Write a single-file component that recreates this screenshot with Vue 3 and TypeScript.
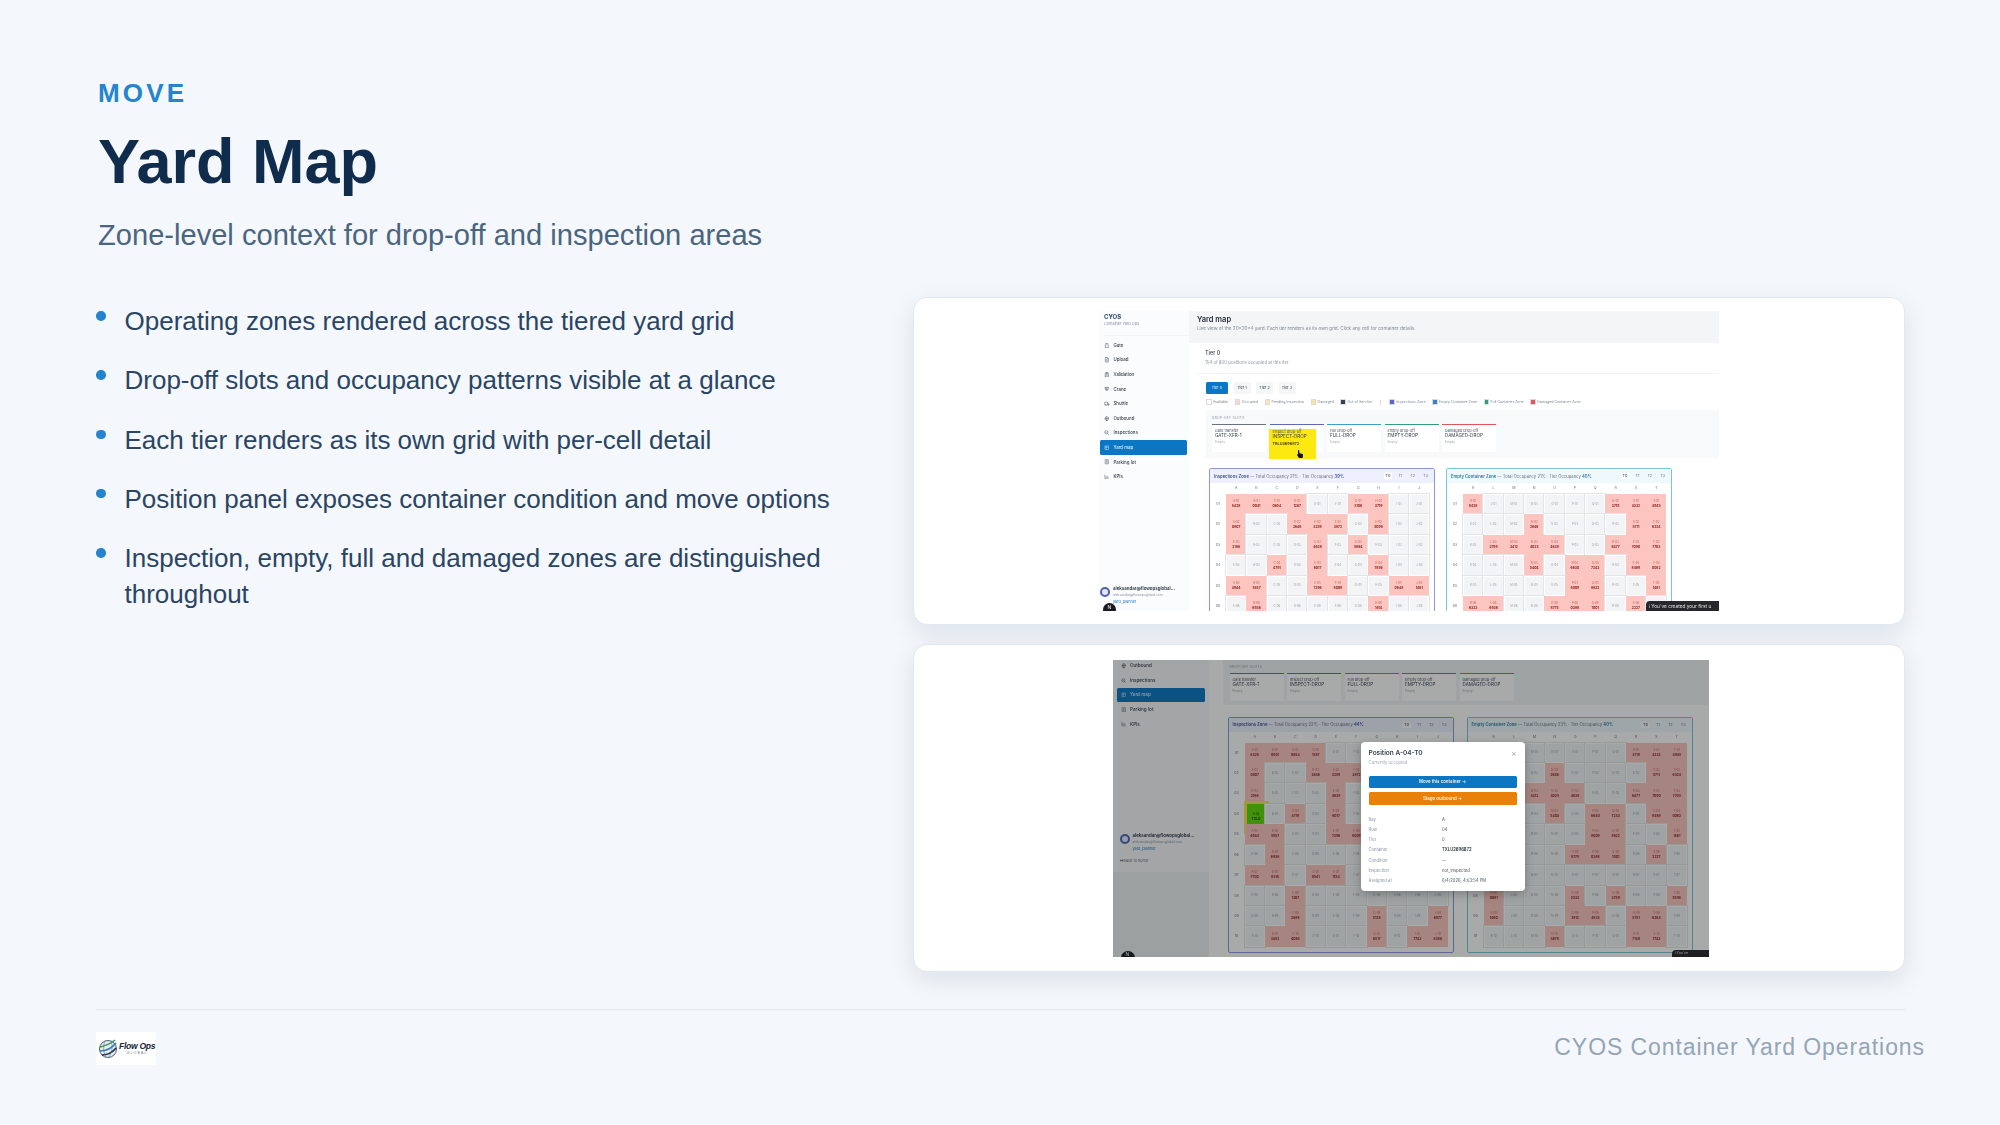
<script setup lang="ts">
interface Zone {
  name: string
  stats: string
  tier: string
  kind: string
  cols: string[]
  rows: string[]
}

const bullets = [
  'Operating zones rendered across the tiered yard grid',
  'Drop-off slots and occupancy patterns visible at a glance',
  'Each tier renders as its own grid with per-cell detail',
  'Position panel exposes container condition and move options',
  'Inspection, empty, full and damaged zones are distinguished throughout',
]

const leftCols = 'ABCDEFGHIJ'.split('')
const rightCols = 'KLMNOPQRST'.split('')
const leftRows = [
  '1111001100',
  '1001110100',
  '1000101000',
  '0010100100',
  '1100110011',
  '0100000100',
  '1101100000',
  '0010000000',
  '0010001001',
  '0110001011',
]
const rightRows = [
  '1000000111',
  '0001000011',
  '0111100111',
  '0001011011',
  '0000011001',
  '1100111010',
  '0000000000',
  '1000101001',
  '1000110110',
  '0001000110',
]

const makeZones = (a: string, b: string, c: string, d: string, count: number): Zone[] => [
  { name: 'Inspections Zone', stats: `— Total Occupancy ${a}% · Tier Occupancy`, tier: `${b}%`, kind: 'insp', cols: leftCols, rows: leftRows.slice(0, count) },
  { name: 'Empty Container Zone', stats: `— Total Occupancy ${c}% · Tier Occupancy`, tier: `${d}%`, kind: 'empty', cols: rightCols, rows: rightRows.slice(0, count) },
]
const zonesA = makeZones('21', '39', '21', '40', 6)
const zonesB = makeZones('22', '44', '23', '40', 10)

const slots = [
  { label: 'Gate transfer', code: 'GATE-XFR-1', color: '#6b7280' },
  { label: 'Inspect drop-off', code: 'INSPECT-DROP', color: '#6366c1' },
  { label: 'Full drop-off', code: 'FULL-DROP', color: '#3b9fc9' },
  { label: 'Empty drop-off', code: 'EMPTY-DROP', color: '#2f9e7e' },
  { label: 'Damaged drop-off', code: 'DAMAGED-DROP', color: '#e0565b' },
]

const icons: Record<string, string> = {
  Gate: 'M6 21V5a3 3 0 0 1 3-3h6a3 3 0 0 1 3 3v16M3 21h18M10 8h4',
  Upload: 'M6 2h8l5 5v15H6zM14 2v5h5M12 18v-6M9 14l3-3 3 3',
  Validation: 'M7 4h10a2 2 0 0 1 2 2v16H5V6a2 2 0 0 1 2-2zM9 2h6v4H9zM8 12h8M8 17h8',
  Crane: 'M2 6h20M12 6v8M6 6v12M18 6v12M9 14h6v5H9z',
  Shuttle: 'M3 5h12v12H3zM15 9h4l3 4v4h-7M7 20a2 2 0 1 0 0-4M18 20a2 2 0 1 0 0-4',
  Outbound: 'M12 3a8 8 0 1 1 0 16 8 8 0 0 1 0-16zM4 11h16M12 3v18M8 21h8',
  Inspections: 'M10 3a7 7 0 1 1 0 14 7 7 0 0 1 0-14zM15 15l6 6M7 10l2 2 4-4',
  'Yard map': 'M4 4h16v16H4zM4 10h16M10 4v16',
  'Parking lot': 'M5 3h14v18H5zM9 8h6M9 12h6M9 16h6',
  KPIs: 'M4 3v18h17M9 17v-6M14 17V8M19 17v-3',
}

const navA = ['Gate', 'Upload', 'Validation', 'Crane', 'Shuttle', 'Outbound', 'Inspections', 'Yard map', 'Parking lot', 'KPIs']
const navB = ['Outbound', 'Inspections', 'Yard map', 'Parking lot', 'KPIs']

const legendA = [
  { t: 'Available', c: '#ffffff' },
  { t: 'Occupied', c: '#fbd5d0' },
  { t: 'Pending Inspection', c: '#fde7b8' },
  { t: 'Damaged', c: '#fbe6a0' },
  { t: 'Out of Service', c: '#374151' },
]
const legendB = [
  { t: 'Inspections Zone', c: '#6366c1' },
  { t: 'Empty Container Zone', c: '#3b82c9' },
  { t: 'Full Container Zone', c: '#2f9e7e' },
  { t: 'Damaged Container Zone', c: '#e0565b' },
]

const details = [
  ['Bay', 'A'],
  ['Row', '04'],
  ['Tier', '0'],
  ['Container', 'TXLU2696872'],
  ['Condition', '—'],
  ['Inspection', 'not_inspected'],
  ['Assigned at', '6/4/2026, 4:03:54 PM'],
]

const rowLabel = (r: number) => String(r + 1).padStart(2, '0')
const boxNo = (r: number, c: number) => String(((r + 3) * 1379 + (c + 7) * 613) % 9000).padStart(4, '0')
</script>

<template>
  <div class="page">
    <header class="head">
      <div class="eyebrow">MOVE</div>
      <h1>Yard Map</h1>
      <p class="sub">Zone-level context for drop-off and inspection areas</p>
    </header>

    <main class="body">
      <ul class="points">
        <li v-for="b in bullets" :key="b">{{ b }}</li>
      </ul>

      <div class="cards">
        <section class="card">
          <div class="shot shot-a">
            <aside class="side">
              <div class="brand">CYOS</div>
              <div class="brand-sub">Container Yard Ops</div>
              <div class="nav">
                <div v-for="n in navA" :key="n" class="nav-item" :class="{ active: n === 'Yard map' }">
                  <svg class="nav-ic" viewBox="0 0 24 24"><path :d="icons[n]" /></svg>{{ n }}
                </div>
              </div>
              <div class="user">
                <span class="avatar"></span>
                <div>
                  <div class="u-name">aleksandar@flowopsglobal...</div>
                  <div class="u-mail">aleksandar@flowopsglobal.com</div>
                  <div class="u-role">yard_planner</div>
                </div>
              </div>
              <span class="help">N</span>
            </aside>
            <div class="main">
              <div class="top">
                <div class="top-title">Yard map</div>
                <div class="top-sub">Live view of the 20×20×4 yard. Each tier renders as its own grid. Click any cell for container details.</div>
              </div>
              <div class="tier-head">
                <div class="tier-title">Tier 0</div>
                <div class="tier-sub">154 of 800 positions occupied at this tier</div>
              </div>
              <div class="tabs">
                <span class="tab on">Tier 0</span>
                <span class="tab">Tier 1</span>
                <span class="tab">Tier 2</span>
                <span class="tab">Tier 3</span>
              </div>
              <div class="legend">
                <span v-for="l in legendA" :key="l.t" class="lg"><i :style="{ background: l.c }"></i>{{ l.t }}</span>
                <span class="lg-sep"></span>
                <span v-for="l in legendB" :key="l.t" class="lg"><i :style="{ background: l.c }"></i>{{ l.t }}</span>
              </div>
              <div class="drop">
                <div class="drop-title">DROP-OFF SLOTS</div>
                <div class="slots">
                  <div v-for="(s, i) in slots" :key="s.code" class="slot" :style="{ borderTopColor: s.color }">
                    <div class="s-label">{{ s.label }}</div>
                    <div class="s-code">{{ s.code }}</div>
                    <div class="s-state">Empty</div>
                    <div v-if="i === 1" class="mark">
                      <div class="s-label">Inspect drop-off</div>
                      <div class="s-code">INSPECT-DROP</div>
                      <div class="s-box">TRLU3696872</div>
                      <svg class="hand" viewBox="0 0 12 14"><path d="M4 1c.6 0 1 .4 1 1v4l4 .8c1 .2 1.6 1 1.5 2L10 13H4.500L1.500 8.500c-.4-.6.400-1.400 1-.9L3 8V2c0-.6.400-1 1-1z" fill="#111" /></svg>
                    </div>
                  </div>
                </div>
              </div>
              <div class="zones">
                <div v-for="z in zonesA" :key="z.name" class="zone" :class="z.kind">
                  <div class="z-head">
                    <span class="z-title"><b>{{ z.name }}</b> {{ z.stats }} <b>{{ z.tier }}</b></span>
                    <span class="z-tabs"><em class="sel">T0</em><em>T1</em><em>T2</em><em>T3</em></span>
                  </div>
                  <div class="z-grid">
                    <span class="z-corner"></span>
                    <span v-for="c in z.cols" :key="c" class="z-col">{{ c }}</span>
                    <template v-for="(row, r) in z.rows" :key="r">
                      <span class="z-row">{{ rowLabel(r) }}</span>
                      <span v-for="(c, ci) in z.cols" :key="c" class="cell" :class="{ full: row[ci] === '1' }">
                        <span class="c-pos">{{ c }}-{{ rowLabel(r) }}</span>
                        <span v-if="row[ci] === '1'" class="c-no">{{ boxNo(r, ci) }}</span>
                      </span>
                    </template>
                  </div>
                </div>
              </div>
              <div class="toast">ℹ You've created your first u</div>
            </div>
          </div>
        </section>

        <section class="card">
          <div class="shot shot-b">
            <aside class="side">
              <div class="nav">
                <div v-for="n in navB" :key="n" class="nav-item" :class="{ active: n === 'Yard map' }">
                  <svg class="nav-ic" viewBox="0 0 24 24"><path :d="icons[n]" /></svg>{{ n }}
                </div>
              </div>
              <div class="user">
                <span class="avatar"></span>
                <div>
                  <div class="u-name">aleksandar@flowopsglobal...</div>
                  <div class="u-mail">aleksandar@flowopsglobal.com</div>
                  <div class="u-role">yard_planner</div>
                </div>
              </div>
              <div class="back">↦ Back to home</div>
              <span class="help">N</span>
            </aside>
            <div class="main">
              <div class="drop">
                <div class="drop-title">DROP-OFF SLOTS</div>
                <div class="slots">
                  <div v-for="s in slots" :key="s.code" class="slot" :style="{ borderTopColor: s.color }">
                    <div class="s-label">{{ s.label }}</div>
                    <div class="s-code">{{ s.code }}</div>
                    <div class="s-state">Empty</div>
                  </div>
                </div>
              </div>
              <div class="zones">
                <div v-for="(z, zi) in zonesB" :key="z.name" class="zone" :class="z.kind">
                  <div class="z-head">
                    <span class="z-title"><b>{{ z.name }}</b> {{ z.stats }} <b>{{ z.tier }}</b></span>
                    <span class="z-tabs"><em class="sel">T0</em><em>T1</em><em>T2</em><em>T3</em></span>
                  </div>
                  <div class="z-grid">
                    <span class="z-corner"></span>
                    <span v-for="c in z.cols" :key="c" class="z-col">{{ c }}</span>
                    <template v-for="(row, r) in z.rows" :key="r">
                      <span class="z-row">{{ rowLabel(r) }}</span>
                      <span v-for="(c, ci) in z.cols" :key="c" class="cell" :class="{ full: row[ci] === '1' }">
                        <span class="c-pos">{{ c }}-{{ rowLabel(r) }}</span>
                        <span v-if="row[ci] === '1'" class="c-no">{{ boxNo(r, ci) }}</span>
                        <span v-if="zi === 0 && r === 3 && ci === 0" class="pick">
                          <span class="c-pos">A-04</span>
                          <span class="c-no">TXLU</span>
                        </span>
                      </span>
                    </template>
                  </div>
                </div>
              </div>
              <div class="toast">ℹ You've</div>
            </div>
            <div class="dim"></div>
            <div class="modal">
              <div class="m-head">
                <div>
                  <div class="m-title">Position A-04-T0</div>
                  <div class="m-sub">Currently occupied</div>
                </div>
                <span class="m-close">×</span>
              </div>
              <button class="m-btn blue" type="button">Move this container →</button>
              <button class="m-btn orange" type="button">Stage outbound →</button>
              <dl class="m-list">
                <template v-for="d in details" :key="d[0]">
                  <dt>{{ d[0] }}</dt>
                  <dd :class="{ strong: d[0] === 'Container' }">{{ d[1] }}</dd>
                </template>
              </dl>
            </div>
          </div>
        </section>
      </div>
    </main>

    <footer class="foot">
      <div class="logo">
        <svg class="globe" viewBox="0 0 20 20">
          <circle cx="10" cy="10" r="8.500" fill="#e8edf2" stroke="#4b5f75" stroke-width="1" />
          <path d="M2 8c5-1 10-3 15-7" fill="none" stroke="#3f9a4c" stroke-width="1.600" />
          <path d="M2 12c6 0 12-3 16-8" fill="none" stroke="#2c7fb8" stroke-width="1.600" />
          <path d="M4 16c5 0 10-2 14-7" fill="none" stroke="#1f3247" stroke-width="1.600" />
          <path d="M7 2c-2 5-2 11 1 16M13 2c2 5 1 11-2 16" fill="none" stroke="#64748b" stroke-width=".6" />
        </svg>
        <div class="logo-text">
          <div class="logo-name">Flow Ops</div>
          <div class="logo-tag">GLOBAL</div>
        </div>
      </div>
      <div class="foot-text">CYOS Container Yard Operations</div>
    </footer>
  </div>
</template>

<style>
html,
body {
  margin: 0;
  background: #f4f7fb;
}
</style>

<style scoped>
.page {
  width: 2000px;
  height: 1125px;
  box-sizing: border-box;
  padding: 78px 95px 0 96px;
  background: #f4f7fb;
  font-family: 'Liberation Sans', Arial, sans-serif;
  overflow: hidden;
  display: flex;
  flex-direction: column;
}

.head {
  padding-left: 2px;
}

.eyebrow {
  font-size: 26px;
  line-height: 30px;
  font-weight: 700;
  letter-spacing: 3.200px;
  color: #2484cf;
}

h1 {
  margin: 16px 0 0;
  font-size: 63px;
  line-height: 74px;
  font-weight: 700;
  color: #102c4c;
}

.sub {
  margin: 19px 0 0;
  font-size: 29.100px;
  line-height: 36px;
  color: #4a6580;
}

.body {
  display: flex;
  justify-content: space-between;
  margin-top: 44px;
}

.points {
  list-style: none;
  margin: 0;
  padding: 6px 0 0;
  width: 740px;
}

.points li {
  position: relative;
  padding-left: 28.500px;
  margin-bottom: 23.300px;
  font-size: 26px;
  line-height: 36px;
  color: #2a4564;
}

.points li::before {
  content: '';
  position: absolute;
  left: 0;
  top: 8px;
  width: 9.500px;
  height: 9.500px;
  border-radius: 50%;
  background: #2484cf;
}

.cards {
  width: 992px;
  display: flex;
  flex-direction: column;
  gap: 19px;
}

.card {
  height: 328px;
  box-sizing: border-box;
  background: #fff;
  border: 1px solid #e2e8ef;
  border-radius: 14px;
  box-shadow: 0 8px 24px rgba(16, 44, 76, 0.1);
  display: flex;
  align-items: center;
  justify-content: center;
}

.foot {
  margin-top: 37px;
  border-top: 1px solid #e2e8ef;
  padding-top: 22px;
  display: flex;
  justify-content: space-between;
  align-items: flex-start;
}

.logo {
  width: 60px;
  height: 33px;
  background: #fff;
  display: flex;
  align-items: center;
  gap: 1px;
  padding-left: 2px;
  box-sizing: border-box;
}

.globe {
  width: 20px;
  height: 20px;
  flex: none;
}

.logo-name {
  font-size: 8.600px;
  line-height: 10px;
  font-weight: 700;
  font-style: italic;
  letter-spacing: -0.3px;
  color: #14233a;
  white-space: nowrap;
}

.logo-tag {
  font-size: 3.500px;
  line-height: 5px;
  letter-spacing: 1.200px;
  color: #6b7a8c;
  text-align: center;
}

.foot-text {
  margin: 0 -20px 0 0;
  font-size: 23px;
  line-height: 30px;
  letter-spacing: 0.92px;
  color: #94a5b6;
}

/* screenshot mock-ups */
.shot {
  position: relative;
  display: flex;
  overflow: hidden;
  font-family: Inter, 'Liberation Sans', sans-serif;
  color: #374151;
  background: #fff;
  filter: blur(0.4px);
}

.shot-a {
  width: 620px;
  height: 300px;
}

.shot-b {
  width: 596px;
  height: 297px;
  margin-left: 3px;
}

.side {
  position: relative;
  flex: none;
  width: 90px;
  box-sizing: border-box;
  background: #fbfcfd;
  display: flex;
  flex-direction: column;
}

.shot-b .side {
  width: 96px;
  background: linear-gradient(#f7f8f9 212px, #eef0f1 212px);
}

.brand {
  margin: 1px 0 0 5px;
  padding-top: 1px;
  font-size: 6px;
  line-height: 8px;
  font-weight: 700;
  color: #1e3a5f;
}

.brand-sub {
  margin-left: 5px;
  font-size: 3.800px;
  line-height: 6px;
  color: #8a94a3;
  padding-bottom: 8px;
  border-bottom: 1px solid #f1f3f5;
}

.nav {
  margin-top: 2px;
  display: flex;
  flex-direction: column;
}

.shot-b .nav {
  margin-top: -1px;
}

.nav-item {
  flex: none;
  height: 14.600px;
  display: flex;
  align-items: center;
  gap: 4px;
  margin: 0 2px 0 1px;
  padding-left: 4px;
  border-radius: 1.500px;
  font-size: 4.400px;
  font-weight: 500;
  color: #374151;
}

.shot-b .nav-item {
  margin: 0 4px;
  font-size: 4.600px;
}

.nav-item.active {
  background: #0a76c4;
  color: #d9ecfa;
}

.nav-ic {
  width: 5.500px;
  height: 5.500px;
  flex: none;
  fill: none;
  stroke: currentColor;
  stroke-width: 2;
}

.user {
  position: absolute;
  left: 1px;
  top: 274px;
  display: flex;
  gap: 3px;
  align-items: flex-start;
}

.shot-b .user {
  left: 7px;
  top: 172px;
}

.avatar {
  width: 10px;
  height: 10px;
  margin-top: 2px;
  box-sizing: border-box;
  border-radius: 50%;
  border: 2.500px solid #4f5fb8;
  background: #e7e9f8;
  flex: none;
}

.u-name {
  font-size: 4.400px;
  line-height: 7px;
  font-weight: 600;
  color: #1f2937;
  white-space: nowrap;
}

.u-mail {
  font-size: 3.300px;
  line-height: 6px;
  color: #8a94a3;
  white-space: nowrap;
}

.u-role {
  font-size: 3.800px;
  line-height: 7px;
  color: #2f7fc4;
}

.back {
  position: absolute;
  left: 7px;
  top: 198px;
  font-size: 3.800px;
  color: #6b7280;
}

.help {
  position: absolute;
  left: 4px;
  top: 292px;
  width: 13px;
  height: 13px;
  border-radius: 50%;
  background: #1b1b1f;
  color: #fff;
  font-size: 5px;
  line-height: 8px;
  text-align: center;
}

.shot-b .help {
  left: 8px;
  top: 291px;
  width: 14px;
  height: 14px;
  line-height: 6px;
}

.main {
  position: relative;
  flex: 1;
  min-width: 0;
  background: #fff;
  display: flex;
  flex-direction: column;
  align-items: flex-start;
}

.main > * {
  flex: none;
}

.top {
  align-self: stretch;
  height: 32px;
  box-sizing: border-box;
  padding: 4px 0 0 8px;
  background: #f4f5f7;
}

.top-title {
  font-size: 7.500px;
  line-height: 10px;
  font-weight: 600;
  color: #1f2937;
}

.top-sub {
  font-size: 4.650px;
  line-height: 7px;
  color: #7d8794;
}

.tier-head {
  align-self: stretch;
  height: 31px;
  box-sizing: border-box;
  margin-left: 8px;
  padding: 5px 0 0 8px;
  border-bottom: 1px solid #f1f3f5;
}

.tier-title {
  font-size: 5.500px;
  line-height: 10px;
  font-weight: 500;
}

.tier-sub {
  font-size: 4.350px;
  line-height: 10px;
  color: #8a94a3;
}

.tabs {
  display: flex;
  gap: 5.500px;
  margin: 8px 0 0 17px;
}

.tab {
  width: 17px;
  height: 12px;
  border-radius: 1.500px;
  background: #f5f6f7;
  font-size: 3.800px;
  line-height: 12px;
  text-align: center;
}

.tab.on {
  width: 22px;
  background: #0a76c4;
  color: #dcedfa;
}

.legend {
  display: flex;
  align-items: center;
  gap: 6.500px;
  margin: 4px 0 0 17px;
  height: 8px;
  font-size: 3.600px;
  color: #7d8794;
  white-space: nowrap;
}

.lg {
  display: inline-flex;
  align-items: center;
  gap: 1.500px;
}

.lg i {
  width: 3.500px;
  height: 3.500px;
  border: 0.4px solid #d7dbe0;
}

.lg-sep {
  width: 0.6px;
  height: 5px;
  margin: 0 2px;
  background: #d7dbe0;
}

.drop {
  align-self: stretch;
  margin: 4px 0 0 17px;
  height: 48px;
  box-sizing: border-box;
  padding: 5px 0 0 6px;
  background: #f8f9fa;
}

.shot-b .drop {
  margin: 0 0 0 14px;
  height: 45px;
  padding: 4px 0 0 7px;
  background: #f3f4f5;
}

.drop-title {
  font-size: 3.300px;
  line-height: 6px;
  letter-spacing: 0.3px;
  color: #8a94a3;
}

.slots {
  display: flex;
  gap: 3.500px;
  margin-top: 3px;
}

.slot {
  position: relative;
  width: 54px;
  height: 28px;
  box-sizing: border-box;
  padding: 3px 0 0 3px;
  border-top: 1.500px solid #888;
  background: #fff;
}

.s-label {
  font-size: 3.800px;
  line-height: 5px;
  color: #4b5563;
  white-space: nowrap;
}

.s-code {
  font-size: 4.600px;
  line-height: 6px;
  color: #374151;
  white-space: nowrap;
}

.s-state {
  font-size: 3.400px;
  line-height: 6px;
  color: #a3abb6;
}

.s-box {
  font-size: 3.800px;
  line-height: 7px;
  font-weight: 600;
}

.mark {
  position: absolute;
  left: -1px;
  top: 4px;
  width: 47px;
  height: 30px;
  box-sizing: border-box;
  padding: 0 0 0 4px;
  background: #fde910;
  color: #3d3d10;
}

.hand {
  position: absolute;
  left: 27px;
  top: 20px;
  width: 8px;
  height: 10px;
}

.zones {
  display: flex;
  gap: 11px;
  margin: 10px 0 0 20px;
}

.shot-b .zones {
  margin: 12px 0 0 19px;
  gap: 13px;
}

.zone {
  flex: none;
  width: 226px;
  box-sizing: border-box;
  border: 1px solid #8a97d8;
  border-radius: 2px;
  background: #fff;
}

.zone.empty {
  border-color: #7cc4dc;
}

.z-head {
  height: 14px;
  display: flex;
  align-items: center;
  justify-content: space-between;
  padding: 0 4px;
  background: #eef1fd;
}

.zone.empty .z-head {
  background: #eff9fd;
}

.z-title {
  font-size: 4.200px;
  color: #6b7280;
  white-space: nowrap;
}

.z-title b {
  font-weight: 600;
  color: #3d4fa0;
}

.zone.empty .z-title b {
  color: #2b7ea1;
}

.z-tabs {
  display: flex;
  gap: 4px;
}

.z-tabs em {
  font-style: normal;
  font-size: 3.800px;
  line-height: 6px;
  padding: 0 2px;
  color: #6b7280;
}

.z-tabs em.sel {
  background: #fff;
  font-weight: 600;
}

.z-grid {
  display: grid;
  grid-template-columns: 16px repeat(10, 20.350px);
  grid-template-rows: 11px;
  grid-auto-rows: 20.450px;
  padding-bottom: 5px;
}

.z-corner,
.z-col {
  height: 11px;
  font-size: 3.600px;
  line-height: 11px;
  text-align: center;
  color: #6b7280;
}

.z-row {
  font-size: 3.600px;
  line-height: 20px;
  text-align: center;
  color: #6b7280;
}

.cell {
  position: relative;
  box-sizing: border-box;
  display: flex;
  flex-direction: column;
  align-items: center;
  justify-content: center;
  background: #f3f4f5;
  border: 0.5px solid #fff;
  outline: 0.3px solid #e2e4e7;
  outline-offset: -0.3px;
}

.cell.full {
  background: #fcc5bf;
  border-color: #fcc5bf;
  outline: none;
}

.c-pos {
  font-size: 2.800px;
  line-height: 5px;
  color: #9aa1ab;
}

.cell.full .c-pos {
  color: #c4665c;
}

.c-no {
  font-size: 3.300px;
  line-height: 5px;
  font-weight: 700;
  color: #8a1f1f;
}

.pick {
  position: absolute;
  left: 0;
  top: -2px;
  width: 21px;
  height: 29px;
  display: flex;
  flex-direction: column;
  align-items: center;
  justify-content: center;
  background: #5fd808;
  outline: 3px solid #f7e25a;
  outline-offset: -1px;
}

.pick .c-pos,
.pick .c-no {
  color: #124a00;
}

.toast {
  position: absolute;
  right: 0;
  bottom: 0;
  width: 73px;
  height: 10px;
  padding-left: 3px;
  box-sizing: border-box;
  border-radius: 4px 0 0 0;
  background: #26262b;
  color: #e5e5e5;
  font-size: 4.800px;
  line-height: 10px;
  white-space: nowrap;
  overflow: hidden;
}

.shot-b .toast {
  width: 37px;
  height: 7px;
  font-size: 3.600px;
  line-height: 7px;
}

.dim {
  position: absolute;
  inset: 0;
  background: rgba(15, 20, 20, 0.36);
}

.modal {
  position: absolute;
  left: 248px;
  top: 82px;
  width: 164px;
  height: 149px;
  box-sizing: border-box;
  padding: 7px 8px 0;
  background: #fff;
  border-radius: 4px;
  box-shadow: 0 3px 10px rgba(0, 0, 0, 0.25);
}

.m-head {
  display: flex;
  justify-content: space-between;
  height: 27px;
}

.m-title {
  font-size: 6.500px;
  line-height: 9px;
  font-weight: 600;
  color: #374151;
}

.m-sub {
  font-size: 4.300px;
  line-height: 9px;
  color: #a3abb6;
}

.m-close {
  font-size: 8px;
  line-height: 9px;
  color: #9aa1ab;
}

.m-btn {
  display: block;
  width: 100%;
  height: 12.500px;
  border: 0;
  border-radius: 1.500px;
  padding: 0;
  font: 600 4.400px Inter, 'Liberation Sans', sans-serif;
  color: #e8f3fb;
}

.m-btn.blue {
  background: #0a76c4;
  margin-bottom: 4px;
}

.m-btn.orange {
  background: #e8800a;
  color: #fdeed8;
}

.m-list {
  display: grid;
  grid-template-columns: 73.500px 1fr;
  grid-auto-rows: 10.300px;
  margin: 10px 0 0;
  font-size: 4.200px;
  line-height: 10.300px;
}

.m-list dt {
  color: #8a94a3;
}

.m-list dd {
  margin: 0;
  color: #4b5563;
}

.m-list dd.strong {
  font-weight: 600;
  color: #1f2937;
}
</style>
